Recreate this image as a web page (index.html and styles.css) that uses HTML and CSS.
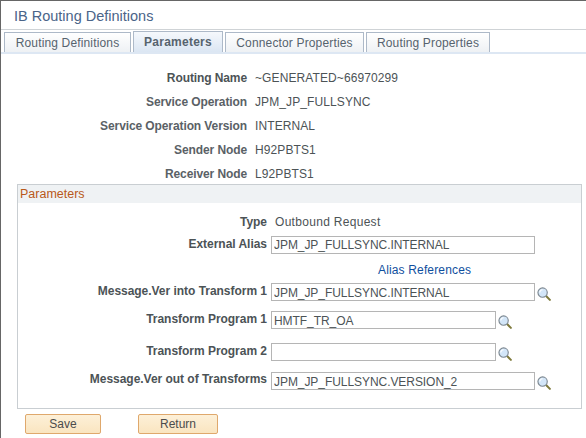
FILE: index.html
```html
<!DOCTYPE html>
<html lang="en">
<head>
    <meta charset="UTF-8">
    <title>IB Routing Definitions</title>
    <link rel="stylesheet" href="styles.css">
</head>
<body>
    <svg width="0" height="0" class="defs">
        <symbol id="lookup" viewBox="0 0 15 15">
            <path d="M10 10l3.8 3.8" stroke="#7f7a3c" stroke-width="2.2" stroke-linecap="round"/>
            <circle cx="6" cy="6" r="5" fill="#d3e6f8" stroke="#7c8790" stroke-width="1.2"/>
            <path d="M3 6a3 3 0 0 1 3-3" fill="none" stroke="#fff" stroke-width="1.2"/>
        </symbol>
    </svg>

    <h1 class="title">IB Routing Definitions</h1>

    <div class="tabs">
        <a class="tab tab-routing">Routing Definitions</a>
        <a class="tab tab-params active">Parameters</a>
        <a class="tab tab-connector">Connector Properties</a>
        <a class="tab tab-props">Routing Properties</a>
    </div>

    <div class="summary">
        <div class="summary-row"><label class="strong">Routing Name</label><span>~GENERATED~66970299</span></div>
        <div class="summary-row"><label>Service Operation</label><span>JPM_JP_FULLSYNC</span></div>
        <div class="summary-row"><label>Service Operation Version</label><span>INTERNAL</span></div>
        <div class="summary-row"><label>Sender Node</label><span>H92PBTS1</span></div>
        <div class="summary-row"><label>Receiver Node</label><span>L92PBTS1</span></div>
    </div>

    <div class="group">
        <div class="group-header">Parameters</div>
        <div class="group-body">
            <div class="row row-type"><label>Type</label><span class="value">Outbound Request</span></div>
            <div class="row row-alias">
                <label>External Alias</label>
                <input type="text" class="wide" value="JPM_JP_FULLSYNC.INTERNAL">
            </div>
            <div class="row row-link"><a class="link">Alias References</a></div>
            <div class="row row-msg">
                <label>Message.Ver into Transform 1</label>
                <input type="text" class="wide" value="JPM_JP_FULLSYNC.INTERNAL">
                <svg class="icon"><use href="#lookup"/></svg>
            </div>
            <div class="row row-prog1">
                <label>Transform Program 1</label>
                <input type="text" class="medium" value="HMTF_TR_OA">
                <svg class="icon"><use href="#lookup"/></svg>
            </div>
            <div class="row row-prog2">
                <label>Transform Program 2</label>
                <input type="text" class="medium" value="">
                <svg class="icon"><use href="#lookup"/></svg>
            </div>
            <div class="row row-out">
                <label>Message.Ver out of Transforms</label>
                <input type="text" class="wide" value="JPM_JP_FULLSYNC.VERSION_2">
                <svg class="icon"><use href="#lookup"/></svg>
            </div>
        </div>
    </div>

    <div class="buttons">
        <button class="btn btn-save">Save</button>
        <button class="btn btn-return">Return</button>
    </div>
</body>
</html>
```
FILE: styles.css
```css
html, body {
    height: 100%;
}

body {
    margin: 0;
    box-sizing: border-box;
    overflow: hidden;
    background: #fff;
    border-top: 1px solid #666;
    border-left: 1px solid #666;
    font-family: "Liberation Sans", Arial, sans-serif;
    font-size: 12px;
    color: #4c5356;
}

.defs {
    position: absolute;
}

.title {
    margin: 0;
    height: 29px;
    padding: 6px 0 0 13px;
    box-sizing: border-box;
    font-size: 14.5px;
    font-weight: normal;
    line-height: 18px;
    color: #4a6488;
    border-bottom: 1px solid #cfd3d6;
}

/* Tabs */
.tabs {
    display: flex;
    height: 24px;
    padding: 2px 0 0 3px;
    box-sizing: border-box;
    border-bottom: 2px solid #dde7f3;
}

.tab {
    display: block;
    height: 20px;
    margin-right: 2px;
    box-sizing: border-box;
    text-align: center;
    line-height: 20px;
    letter-spacing: .15px;
    color: #56636e;
    background: linear-gradient(#fff, #eef1f4);
    border: 1px solid #adb9c8;
    border-bottom: 0;
}

.tab.active {
    height: 21px;
    margin-top: -1px;
    font-weight: bold;
    letter-spacing: .25px;
    background: linear-gradient(#f5f8fc, #dbe6f3);
}

.tab-routing { width: 127px; }
.tab-params { width: 90px; }
.tab-connector { width: 139px; }
.tab-props { width: 124px; }

/* Read only details */
.summary {
    padding-top: 12px;
}

.summary-row {
    display: flex;
    height: 24px;
    align-items: center;
}

.summary-row label {
    width: 246px;
    margin-right: 8px;
    text-align: right;
    font-weight: bold;
    letter-spacing: -.1px;
    color: #5a6166;
}

.summary-row label.strong {
    color: #4c5356;
}

.summary-row span {
    letter-spacing: .1px;
}

/* Parameters box */
.group {
    width: 565px;
    height: 225px;
    box-sizing: border-box;
    margin: -2px 0 0 16px;
    border: 1px solid #c9ced2;
}

.group-header {
    height: 18px;
    padding-left: 2px;
    line-height: 19px;
    font-size: 12.5px;
    color: #b9591a;
    background: #eff2f4;
}

.group-body {
    padding-top: 8px;
}

.row {
    display: flex;
    align-items: center;
}

.row label {
    width: 249px;
    margin: 0 4px 2px 0;
    text-align: right;
    font-weight: bold;
    letter-spacing: -.03px;
    color: #4c5356;
}

.value {
    margin-left: 4px;
    letter-spacing: .3px;
}

.row-type { height: 21px; }
.row-type label { margin-bottom: 0; }
.row-alias { height: 25px; }
.row-link { height: 22px; padding-left: 360px; }
.row-msg { height: 26px; }
.row-prog1 { height: 30px; }
.row-prog2 { height: 34px; }
.row-out { height: 24px; }
.row-out label { margin-bottom: 4px; }

.link {
    margin-top: 3px;
    letter-spacing: .15px;
    color: #0f4f9e;
}

input {
    height: 18px;
    padding: 1px 2px 0;
    box-sizing: border-box;
    border: 1px solid #b5b5b5;
    border-radius: 0;
    outline: 0;
    font-family: "Liberation Sans", Arial, sans-serif;
    font-size: 12px;
    letter-spacing: -.06px;
    color: #4c5356;
    background: #fff;
}

input.wide {
    width: 264px;
}

input.medium {
    width: 225px;
}

.icon {
    width: 14px;
    height: 14px;
    margin: 3px 0 0 2px;
}

/* Save and Return */
.buttons {
    display: flex;
    padding: 5px 0 0 24px;
}

.btn {
    height: 20px;
    padding: 0;
    font-family: "Liberation Sans", Arial, sans-serif;
    font-size: 12px;
    color: #4c4c4c;
    background: linear-gradient(#fdf0d8, #fae5c0);
    border: 1px solid #dfa86c;
    border-radius: 2px;
}

.btn-save {
    width: 76px;
    margin-right: 37px;
}

.btn-return {
    width: 80px;
}
```
